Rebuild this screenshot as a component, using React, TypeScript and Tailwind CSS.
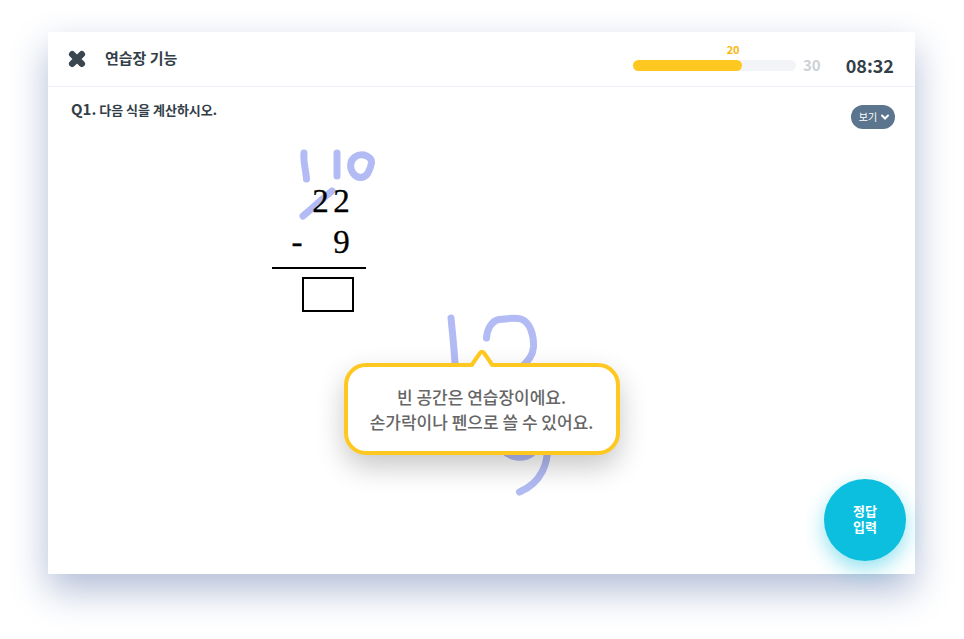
import React from "react";

function CloseIcon() {
  return (
    <svg viewBox="0 0 18 18" className="h-[18px] w-[18px]" fill="none" aria-hidden="true">
      <path d="M4.200 4.200L13.800 13.800M13.800 4.200L4.200 13.800" stroke="#3a4751" strokeWidth="6.500" strokeLinecap="round" />
    </svg>
  );
}

function Header() {
  return (
    <header className="flex h-[55px] items-center border-b border-[#edf1f7] px-5 text-[#333e48]">
      <button type="button" aria-label="닫기" className="flex items-center">
        <CloseIcon />
      </button>
      <h1 className="-mt-0.5 ml-[19px] flex-1 text-[15px] leading-6 font-bold">연습장 기능</h1>
      <div className="relative mt-3 h-[11px] w-[163px] rounded-full bg-[#f2f4f8]">
        <div className="relative h-full w-2/3 rounded-full bg-[#ffc820]">
          <span className="absolute right-0.5 bottom-[14px] text-[11px] leading-4 font-bold text-[#fab60a]">20</span>
        </div>
      </div>
      <span className="mt-3 ml-[7px] text-[15px] leading-6 font-bold text-[#cdd1d5]">30</span>
      <time className="mt-3 mr-px ml-[25px] text-[18px] leading-6 font-bold">08:32</time>
    </header>
  );
}

function Handwriting() {
  return (
    <svg
      viewBox="0 0 867 542"
      className="pointer-events-none absolute top-0 left-0 h-[542px] w-[867px]"
      fill="none"
      stroke="#b2bbf4"
      strokeWidth="7"
      strokeLinecap="round"
      strokeLinejoin="round"
      aria-hidden="true"
    >
      <path d="M256 121C255 130 258 138 258.500 147" />
      <path d="M289 121V144" />
      <path d="M307 125C301 129 302 137 305 141C309 147 316 147 320 141C322 137 323 134 323.500 131C324 127 320 124 316 123C312 122.500 309 123.500 307 125Z" />
      <path d="M255 184C265 176 275 166 284 159" />
      <path d="M403 286C405 305 407 325 408 348" />
      <path d="M438.500 306C439 298 443 289 451 287.500C459 286.500 468 285.500 473 287C482 290 486 303 485.500 315C485 322 480 330 472 336C461 345 447 351 447 368C447 386 444 408 454 417C463 427 475 427 483 422C491 415 498 401 499 407C502 431 493 451 471.500 460" />
    </svg>
  );
}

const digitRow =
  "grid justify-end pr-[14px] text-center font-['Liberation_Serif',serif] text-[33px] leading-[41px] [-webkit-text-stroke:0.3px_black]";

function Problem() {
  return (
    <div className="relative mt-[52px] ml-[224px] w-[94px] text-black">
      <div className={`${digitRow} grid-cols-[21px_21px]`}>
        <span>2</span>
        <span>2</span>
      </div>
      <div className={`${digitRow} grid-cols-[12px_28px_21px]`}>
        <span>-</span>
        <span />
        <span>9</span>
      </div>
      <div className="mt-1 h-0.5 bg-black" />
      <input
        type="text"
        aria-label="답"
        className="mt-2 ml-[30px] block h-[35px] w-[52px] rounded-none border-2 border-black bg-white text-center text-[20px] outline-none"
      />
    </div>
  );
}

function Tooltip() {
  return (
    <div
      role="status"
      className="absolute top-[331px] left-1/2 w-[276px] -translate-x-1/2 rounded-[22px] border-4 border-[#ffc820] bg-white px-4 py-[17px] text-center text-[17px] leading-[25px] font-medium text-[#666] shadow-[0_12px_28px_rgba(0,0,0,0.22)]"
    >
      <svg viewBox="0 0 28 21" className="absolute -top-[19px] left-[120px] h-[21px] w-7" fill="none" aria-hidden="true">
        <path d="M3 21L4 17L12 6Q14 4 16 6L24 17L25 21Z" fill="white" />
        <path d="M3 18L12 5Q14 2.500 16 5L25 18" stroke="#ffc820" strokeWidth="4" strokeLinejoin="round" />
      </svg>
      <p>빈 공간은 연습장이에요.</p>
      <p>손가락이나 펜으로 쓸 수 있어요.</p>
    </div>
  );
}

export default function App() {
  return (
    <div className="flex min-h-screen bg-white pt-8 pr-[49px] pb-[65px] pl-12 font-['Noto_Sans_CJK_KR',sans-serif]">
      <main className="relative flex-1 bg-white shadow-[0_16px_36px_#b1bcd6]">
        <Handwriting />
        <Header />
        <section className="flex flex-col">
          <div className="flex items-start justify-between pt-[10px] pr-5 pl-[23px] text-[#333e48]">
            <h2 className="text-[13px] leading-6 font-bold">
              <span className="text-[15px]">Q1.</span> 다음 식을 계산하시오.
            </h2>
            <button
              type="button"
              className="mt-2 flex h-6 w-11 items-center justify-center gap-1 rounded-full bg-[#5b758e] pl-0.5 text-[10px] leading-4 text-white"
            >
              보기
              <svg viewBox="0 0 8 6" className="h-1.5 w-2" fill="none" aria-hidden="true">
                <path d="M1 1.500L4 4.500L7 1.500" stroke="white" strokeWidth="2" strokeLinecap="round" />
              </svg>
            </button>
          </div>
          <Problem />
        </section>
        <Tooltip />
        <button
          type="button"
          className="absolute right-[9px] bottom-[13px] h-[82px] w-[82px] rounded-full bg-[#0dbfde] pb-0.5 text-[13px] leading-4 font-bold text-white shadow-[0_8px_20px_rgba(13,191,222,0.45)]"
        >
          정답
          <br />
          입력
        </button>
      </main>
    </div>
  );
}
